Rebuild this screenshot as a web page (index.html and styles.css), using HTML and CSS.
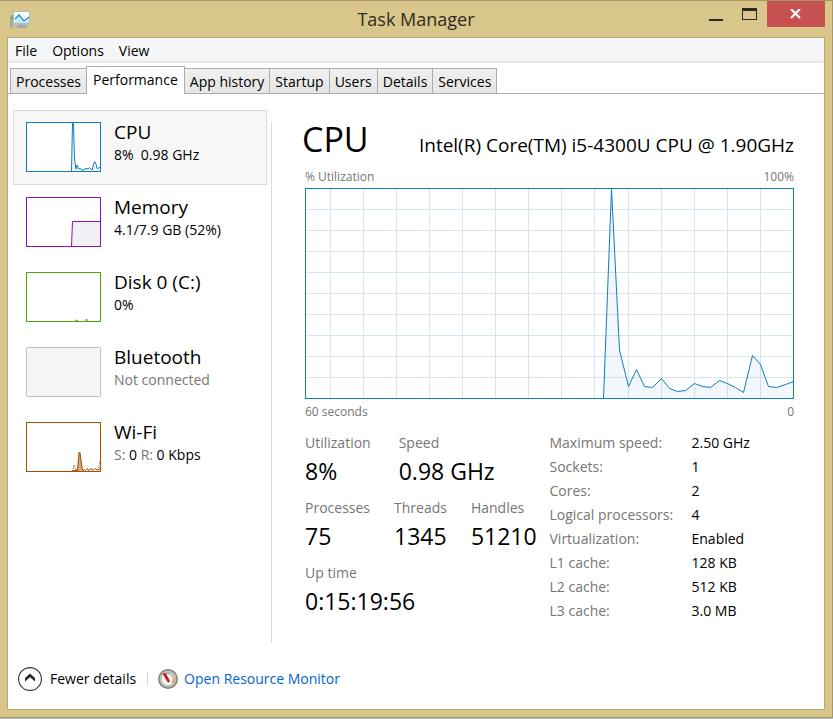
FILE: index.html
```html
<!DOCTYPE html>
<html lang="en">
<head>
  <meta charset="UTF-8" />
  <meta name="viewport" content="width=device-width, initial-scale=1.0"/>
  <title>Task Manager</title>
  <link rel="stylesheet" href="styles.css">
</head>
<body>
  <div class="window">
    <header class="titlebar">
      <svg class="app-icon" width="20" height="17" viewBox="0 0 20 17" aria-hidden="true">
        <rect x="0" y="4" width="3" height="13" fill="#a9a9a6"/>
        <rect x="1" y="6" width="2" height="2" fill="#35d021"/>
        <path d="M8 14h7l3 3H6z" fill="#a3a7a9"/>
        <rect x="3" y="0" width="17" height="14" fill="#b6babd"/>
        <rect x="4" y="1" width="15" height="11" fill="#f8fcfe"/>
        <path d="M5 8l4-3 4 4 2 1 4-3v5H5z" fill="#c3e6f6"/>
        <path d="M5 8l4-4 5 6 5-4" fill="none" stroke="#1b8cc9" stroke-width="1.2"/>
      </svg>
      <h1>Task Manager</h1>
      <div class="window-buttons">
        <button type="button" class="win-btn" aria-label="Minimize">
          <svg width="14" height="14" viewBox="0 0 14 14"><rect y="12" width="14" height="2" fill="#2a2a2a"/></svg>
        </button>
        <button type="button" class="win-btn" aria-label="Maximize">
          <svg width="15" height="12" viewBox="0 0 15 12"><path d="M0 0h15v12H0zM1 3v8h13V3z" fill="#2a2a2a" fill-rule="evenodd"/></svg>
        </button>
        <button type="button" class="win-btn close" aria-label="Close">
          <svg width="12" height="10" viewBox="0 0 12 10"><path d="M1 0l9 9M10 0L1 9" stroke="#fff" stroke-width="2.2"/></svg>
        </button>
      </div>
    </header>

    <div class="client">
      <nav class="menubar">
        <button type="button">File</button>
        <button type="button">Options</button>
        <button type="button">View</button>
      </nav>

      <div class="tabs" role="tablist">
        <button type="button" role="tab">Processes</button>
        <button type="button" role="tab" class="active" aria-selected="true">Performance</button>
        <button type="button" role="tab">App history</button>
        <button type="button" role="tab">Startup</button>
        <button type="button" role="tab">Users</button>
        <button type="button" role="tab">Details</button>
        <button type="button" role="tab">Services</button>
      </div>

      <div class="content">
        <aside class="sidebar">
          <button type="button" class="resource selected">
            <svg class="thumb cpu" width="75" height="50" viewBox="0 0 75 50">
              <path class="area" d="M45.500 49L47 1 48.500 38 50 46 51 43 53 47 55 47 56 48 58 47 60 47 62 46 64 47 66 48 68 39 70 46 72 47 74 46V49z"/>
              <path class="line" d="M45.500 49L46.500 1 47.500 2 48.500 37 50 47 51 43 52.500 47 54.500 46.500 56 48.500 58 47.500 60 46.500 62 47 63.500 45.500 66 48 68.500 39.500 70 42 71 46.500 73 46 74 45"/>
              <rect class="frame" x=".5" y=".5" width="74" height="49"/>
            </svg>
            <span class="resource-text">
              <span class="name">CPU</span>
              <span class="info">8%&nbsp; 0.98 GHz</span>
            </span>
          </button>
          <button type="button" class="resource">
            <svg class="thumb memory" width="75" height="50" viewBox="0 0 75 50">
              <path d="M45.500 49L46.500 24.500H74V49z" fill="#f3f0f5"/>
              <path class="line" d="M45.500 49L46.500 24.500H74"/>
              <rect class="frame" x=".5" y=".5" width="74" height="49"/>
            </svg>
            <span class="resource-text">
              <span class="name">Memory</span>
              <span class="info">4.1/7.9 GB (52%)</span>
            </span>
          </button>
          <button type="button" class="resource">
            <svg class="thumb disk" width="75" height="50" viewBox="0 0 75 50">
              <path class="line" d="M49 49l1.500-1 1.500 1M59 49l1.500-2 1.500 2"/>
              <rect class="frame" x=".5" y=".5" width="74" height="49"/>
            </svg>
            <span class="resource-text">
              <span class="name">Disk 0 (C:)</span>
              <span class="info">0%</span>
            </span>
          </button>
          <button type="button" class="resource">
            <svg class="thumb offline" width="75" height="50" viewBox="0 0 75 50">
              <rect class="frame" x=".5" y=".5" width="74" height="49" rx="1"/>
            </svg>
            <span class="resource-text">
              <span class="name">Bluetooth</span>
              <span class="info muted">Not connected</span>
            </span>
          </button>
          <button type="button" class="resource">
            <svg class="thumb wifi" width="75" height="50" viewBox="0 0 75 50">
              <path class="dashed" d="M46.500 49l1.500-6 2 5 2-2M72 48l2-9"/>
              <path class="spike" d="M51 49l2-19h1l3 19z"/>
              <path class="line" d="M47 48.500h4.500l1.500-18h1l2 16 1 2 1.500-1 1 1 2-2 1 2 3-2 1 2 3-2 2 2 2-2 1 2 1-3"/>
              <rect class="frame" x=".5" y=".5" width="74" height="49"/>
            </svg>
            <span class="resource-text">
              <span class="name">Wi-Fi</span>
              <span class="info"><span class="muted">S:</span> 0 <span class="muted">R:</span> 0 Kbps</span>
            </span>
          </button>
        </aside>

        <main class="details">
          <div class="details-head">
            <h2>CPU</h2>
            <span class="model">Intel(R) Core(TM) i5-4300U CPU @ 1.90GHz</span>
          </div>
          <div class="axis top"><span>% Utilization</span><span>100%</span></div>
          <svg class="chart" viewBox="0 0 489 211" preserveAspectRatio="none" role="img" aria-label="CPU utilization">
            <path class="grid" d="M25.500 0v211M58.500 0v211M91.500 0v211M124.500 0v211M157.500 0v211M190.500 0v211M223.500 0v211M256.500 0v211M289.500 0v211M323.500 0v211M356.500 0v211M389.500 0v211M422.500 0v211M455.500 0v211M0 21.500h487M0 42.500h487M0 63.500h487M0 84.500h487M0 105.500h487M0 126.500h487M0 147.500h487M0 168.500h487M0 189.500h487"/>
            <path class="area" d="M298.500 210.500L306.500 .5 314.500 162 323.500 198.500 331.500 181.500 339.500 198.500 347.500 199.500 356.500 190.500 364.500 200.500 372.500 203.500 380.500 202.500 389.500 195.500 397.500 198.500 405.500 199.500 414.500 192.500 422.500 195.500 430.500 199.500 438.500 204.500 447.500 167.500 455.500 176.500 463.500 198.500 471.500 199.500 480.500 196.500 488.500 193.500V210.500z"/>
            <path class="line" d="M298.500 210.500L306.500 .5 314.500 162 323.500 198.500 331.500 181.500 339.500 198.500 347.500 199.500 356.500 190.500 364.500 200.500 372.500 203.500 380.500 202.500 389.500 195.500 397.500 198.500 405.500 199.500 414.500 192.500 422.500 195.500 430.500 199.500 438.500 204.500 447.500 167.500 455.500 176.500 463.500 198.500 471.500 199.500 480.500 196.500 488.500 193.500"/>
            <rect class="frame" x=".5" y=".5" width="488" height="210"/>
          </svg>
          <div class="axis bottom"><span>60 seconds</span><span>0</span></div>

          <div class="stats">
            <div class="counters">
              <dl class="counter-row wide">
                <div><dt>Utilization</dt><dd>8%</dd></div>
                <div><dt>Speed</dt><dd>0.98 GHz</dd></div>
              </dl>
              <dl class="counter-row">
                <div><dt>Processes</dt><dd>75</dd></div>
                <div><dt>Threads</dt><dd>1345</dd></div>
                <div><dt>Handles</dt><dd>51210</dd></div>
              </dl>
              <dl class="counter-row">
                <div><dt>Up time</dt><dd>0:15:19:56</dd></div>
              </dl>
            </div>
            <table class="specs">
              <tr><th scope="row">Maximum speed:</th><td>2.50 GHz</td></tr>
              <tr><th scope="row">Sockets:</th><td>1</td></tr>
              <tr><th scope="row">Cores:</th><td>2</td></tr>
              <tr><th scope="row">Logical processors:</th><td>4</td></tr>
              <tr><th scope="row">Virtualization:</th><td>Enabled</td></tr>
              <tr><th scope="row">L1 cache:</th><td>128 KB</td></tr>
              <tr><th scope="row">L2 cache:</th><td>512 KB</td></tr>
              <tr><th scope="row">L3 cache:</th><td>3.0 MB</td></tr>
            </table>
          </div>
        </main>
      </div>

      <footer class="footer">
        <button type="button" class="fewer">
          <svg width="24" height="24" viewBox="0 0 24 24" aria-hidden="true">
            <circle cx="12" cy="12" r="11.400" fill="#fff" stroke="#333" stroke-width="1.100"/>
            <path d="M7 14.500v-3.500l5-4.500 5 4.500v3.500l-5-4.300z" fill="#2a2a2a"/>
          </svg>
          Fewer details
        </button>
        <a href="#" class="monitor">
          <svg width="20" height="20" viewBox="0 0 20 20" aria-hidden="true">
            <circle cx="10" cy="10" r="9.200" fill="#c9c9c6" stroke="#7d7d7b" stroke-width="1.500"/>
            <circle cx="10" cy="10" r="7" fill="#f5f5f2" stroke="#aaa9a6"/>
            <path d="M8 4.500a6 6 0 0 1 7 4" fill="none" stroke="#96a596" stroke-width="1.200"/>
            <path d="M15.500 8.500a6 6 0 0 1-1.500 5.500" fill="none" stroke="#ee9355" stroke-width="1.500"/>
            <path d="M4.500 4.500l3-.5 4.500 8-1 1.500-1.500-.5z" fill="#d2121b"/>
          </svg>
          Open Resource Monitor
        </a>
      </footer>
    </div>
  </div>
</body>
</html>
```
FILE: styles.css
```css
* {
  box-sizing: border-box;
}
body {
  margin: 0;
  padding-bottom: 1px;
  min-height: 100vh;
  display: flex;
  background: #b4bfcb;
  font-family: "Open Sans", "Noto Sans", sans-serif;
  font-size: 14px;
  line-height: 20px;
  color: #000;
}
button {
  font: inherit;
  color: inherit;
  background: none;
  border: none;
  padding: 0;
  text-align: left;
}
svg {
  display: block;
  flex-shrink: 0;
}
.window {
  flex: 1;
  display: flex;
  flex-direction: column;
  background: #d9c68b;
  border: 1px solid #a69668;
  border-left: none;
  padding: 0 7px 7px;
}

/* title bar */
.titlebar {
  display: grid;
  grid-template-columns: 1fr auto 1fr;
  height: 36px;
}
.app-icon {
  margin: 10px 0 0 3px;
}
.titlebar h1 {
  margin: 0;
  font-size: 18px;
  font-weight: 400;
  line-height: 36px;
  color: #2f2c24;
}
.window-buttons {
  display: flex;
  justify-content: flex-end;
  height: 26px;
}
.win-btn {
  width: 34px;
  padding-right: 1px;
  display: flex;
  align-items: center;
  justify-content: center;
}
.win-btn.close {
  width: 58px;
  background: #c75050;
}

/* client area */
.client {
  flex: 1;
  display: flex;
  flex-direction: column;
  background: #fff;
  border: 1px solid #b8a775;
}
.menubar {
  display: flex;
  gap: 15px;
  height: 25px;
  padding: 2px 7px 0;
  background: #f5f6f7;
  border-bottom: 2px solid #e8e9eb;
}
.tabs {
  display: flex;
  align-items: flex-end;
  height: 31px;
  padding-left: 2px;
  background: linear-gradient(#acacac, #acacac) bottom / 100% 1px no-repeat;
}
.tabs button {
  height: 26px;
  padding: 2px 5px 0;
  white-space: nowrap;
  background: linear-gradient(#f0f0f0, #e5e5e5);
  border: 1px solid #acacac;
  margin-right: -1px;
}
.tabs .active {
  height: 28px;
  padding: 0 6px 1px;
  background: #fff;
  border-bottom: none;
}
.content {
  flex: 1;
  display: flex;
  padding-top: 16px;
}

/* resource list */
.sidebar {
  flex: 0 0 264px;
  padding: 0 5px;
  background: linear-gradient(#d9d9d9, #d9d9d9) right 12px / 1px 100% no-repeat;
}
.resource {
  display: flex;
  gap: 13px;
  width: 100%;
  height: 75px;
  padding: 11px 12px;
  border: 1px solid transparent;
}
.resource.selected {
  background: #f7f7f7;
  border-color: #dadada;
}
.resource-text {
  display: flex;
  flex-direction: column;
}
.name {
  font-size: 19px;
  line-height: 20px;
}
.info {
  line-height: 26px;
}
.muted {
  color: #767676;
}
.frame {
  fill: none;
  stroke: currentColor;
}
.line {
  fill: none;
  stroke: currentColor;
}
.area {
  fill: currentColor;
  fill-opacity: 0.06;
}
.spike {
  fill: currentColor;
  fill-opacity: 0.5;
}
.dashed {
  fill: none;
  stroke: currentColor;
  stroke-dasharray: 1 1;
}
.thumb {
  background: #fff;
}
.cpu,
.chart {
  color: #117dbb;
}
.memory {
  color: #8b12ae;
}
.disk {
  color: #4da60c;
}
.offline {
  color: #bfbfbf;
  background: #f5f5f5;
}
.wifi {
  color: #a74f01;
}

/* details pane */
.details {
  flex: 1;
  padding: 8px 30px 0 33px;
}
.details-head {
  display: flex;
  justify-content: space-between;
  align-items: baseline;
  height: 49px;
  white-space: nowrap;
}
.details-head h2 {
  margin: 0 0 0 -3px;
  font-size: 34px;
  font-weight: 400;
  line-height: 42px;
}
.model {
  font-size: 19px;
}
.axis {
  display: flex;
  justify-content: space-between;
  font-size: 12px;
  color: #767676;
}
.axis.top {
  padding-bottom: 1px;
}
.chart {
  width: 100%;
  height: 211px;
}
.chart .grid {
  fill: none;
  stroke: #d5e6f1;
}
.axis.bottom {
  padding-top: 3px;
}
.stats {
  display: grid;
  grid-template-columns: 1fr 1fr;
  padding-top: 11px;
}
.counter-row {
  display: flex;
  gap: 24px;
  height: 65px;
  margin: 0;
  white-space: nowrap;
}
.counter-row.wide {
  gap: 28px;
}
.counter-row dt,
.specs th {
  color: #767676;
}
.counter-row dd {
  margin: 0;
  font-size: 23px;
  line-height: 36px;
}
.specs {
  border-collapse: collapse;
  align-self: start;
  margin-top: -2px;
}
.specs th,
.specs td {
  height: 24px;
  padding: 0;
  font-weight: 400;
  text-align: left;
  white-space: nowrap;
}
.specs th {
  width: 142px;
}

/* footer */
.footer {
  display: flex;
  align-items: center;
  height: 66px;
  padding: 6px 10px 0;
}
.fewer,
.monitor {
  display: flex;
  align-items: center;
  gap: 8px;
}
.monitor {
  gap: 6px;
  margin-left: 11px;
  color: #0066cc;
  text-decoration: none;
}
.monitor::before {
  content: "";
  width: 1px;
  height: 14px;
  margin-right: 4px;
  background: #d9d9d9;
}
```
